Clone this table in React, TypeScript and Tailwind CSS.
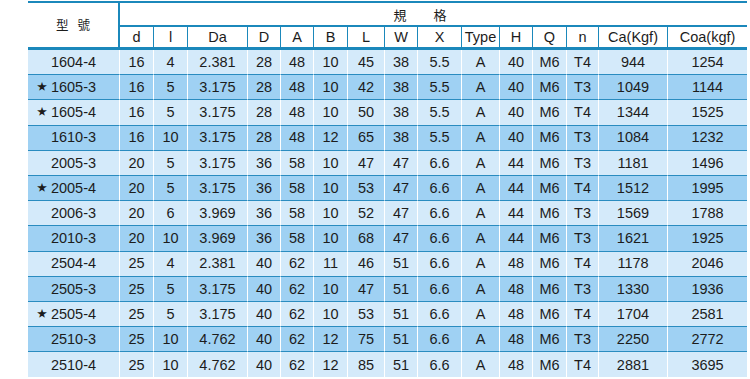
import React from "react";

const widths = [92, 34, 34, 60, 33, 33, 34, 37, 33, 44, 38, 33, 34, 32, 69, 79];
const heads = ["d", "l", "Da", "D", "A", "B", "L", "W", "X", "Type", "H", "Q", "n", "Ca(Kgf)", "Coa(kgf)"];

type Row = { star?: boolean; cells: string[] };

const rows: Row[] = [
  { cells: ["1604-4", "16", "4", "2.381", "28", "48", "10", "45", "38", "5.5", "A", "40", "M6", "T4", "944", "1254"] },
  { star: true, cells: ["1605-3", "16", "5", "3.175", "28", "48", "10", "42", "38", "5.5", "A", "40", "M6", "T3", "1049", "1144"] },
  { star: true, cells: ["1605-4", "16", "5", "3.175", "28", "48", "10", "50", "38", "5.5", "A", "40", "M6", "T4", "1344", "1525"] },
  { cells: ["1610-3", "16", "10", "3.175", "28", "48", "12", "65", "38", "5.5", "A", "40", "M6", "T3", "1084", "1232"] },
  { cells: ["2005-3", "20", "5", "3.175", "36", "58", "10", "47", "47", "6.6", "A", "44", "M6", "T3", "1181", "1496"] },
  { star: true, cells: ["2005-4", "20", "5", "3.175", "36", "58", "10", "53", "47", "6.6", "A", "44", "M6", "T4", "1512", "1995"] },
  { cells: ["2006-3", "20", "6", "3.969", "36", "58", "10", "52", "47", "6.6", "A", "44", "M6", "T3", "1569", "1788"] },
  { cells: ["2010-3", "20", "10", "3.969", "36", "58", "10", "68", "47", "6.6", "A", "44", "M6", "T3", "1621", "1925"] },
  { cells: ["2504-4", "25", "4", "2.381", "40", "62", "11", "46", "51", "6.6", "A", "48", "M6", "T4", "1178", "2046"] },
  { cells: ["2505-3", "25", "5", "3.175", "40", "62", "10", "47", "51", "6.6", "A", "48", "M6", "T3", "1330", "1936"] },
  { star: true, cells: ["2505-4", "25", "5", "3.175", "40", "62", "10", "53", "51", "6.6", "A", "48", "M6", "T4", "1704", "2581"] },
  { cells: ["2510-3", "25", "10", "4.762", "40", "62", "12", "75", "51", "6.6", "A", "48", "M6", "T3", "2250", "2772"] },
  { cells: ["2510-4", "25", "10", "4.762", "40", "62", "12", "85", "51", "6.6", "A", "48", "M6", "T4", "2881", "3695"] },
];

export default function App() {
  return (
    <div
      className="w-[750px] h-[379px] bg-white overflow-hidden pl-[28px] pt-[1px] text-[#1c1c1c]"
      style={{ fontFamily: '"Liberation Sans", Arial, "Noto Sans CJK TC", sans-serif' }}
    >
      <table className="w-[719px] table-fixed border-separate border-spacing-0 border-t-2 border-[#1b88bb] text-[14.5px] leading-none">
        <colgroup>
          {widths.map((w, i) => (
            <col key={i} style={{ width: w }} />
          ))}
        </colgroup>
        <thead>
          <tr>
            <th
              rowSpan={2}
              className="border-r-2 border-b-[3px] border-[#1b88bb] font-normal text-[12.5px] text-center p-0 pl-[9px] tracking-[9px]"
              style={{ fontFamily: '"Noto Sans CJK TC", sans-serif' }}
            >
              型號
            </th>
            <th
              colSpan={15}
              className="h-[24px] border-b-2 border-[#1b88bb] font-normal text-[13px] text-center p-0 tracking-[27px]"
              style={{ fontFamily: '"Noto Sans CJK TC", sans-serif' }}
            >
              規格
            </th>
          </tr>
          <tr>
            {heads.map((h, i) => (
              <th
                key={i}
                className={`h-[23px] border-b-[3px] border-[#1b88bb] font-normal text-center p-0 whitespace-nowrap ${
                  i < heads.length - 1 ? "border-r" : ""
                }`}
              >
                {h}
              </th>
            ))}
          </tr>
        </thead>
        <tbody>
          {rows.map((r, ri) => (
            <tr key={ri} className={ri % 2 === 0 ? "bg-[#d4eafa]" : "bg-[#9fd1f3]"}>
              {r.cells.map((c, ci) => (
                <td
                  key={ci}
                  className={`h-[25.2px] p-0 text-center whitespace-nowrap ${
                    ri < rows.length - 1 ? "border-b border-b-[#2a8cc0]" : ""
                  } ${ci < r.cells.length - 1 ? "border-r border-r-white" : ""} ${ci === 0 ? "relative" : ""}`}
                >
                  {ci === 0 && r.star && (
                    <span className="absolute left-[9px] top-1/2 -translate-y-1/2 text-[10px] leading-none">★</span>
                  )}
                  {c}
                </td>
              ))}
            </tr>
          ))}
        </tbody>
      </table>
    </div>
  );
}
